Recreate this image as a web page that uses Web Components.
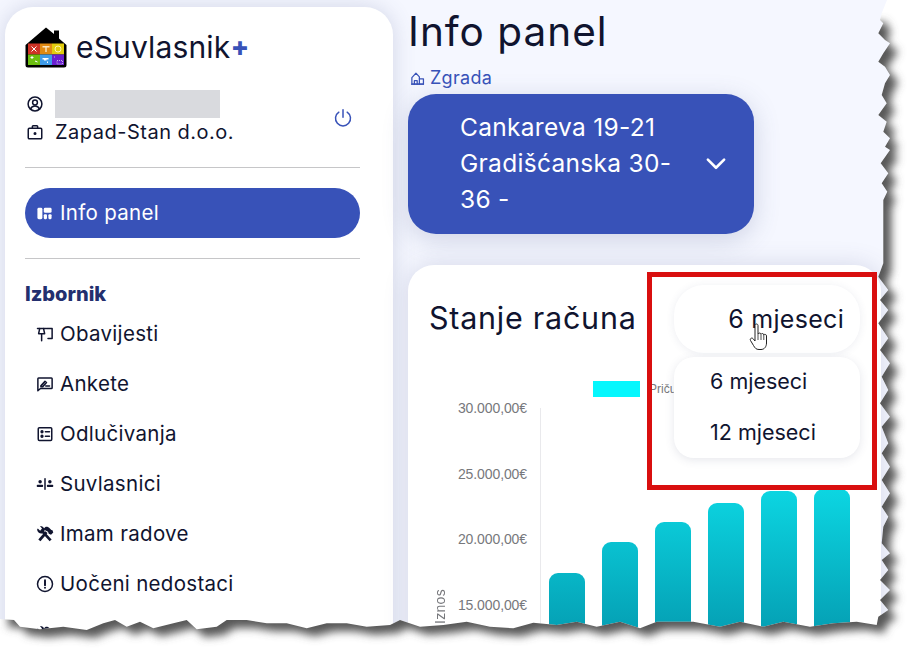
<!DOCTYPE html>
<html lang="hr">
<head>
<meta charset="utf-8">
<title>eSuvlasnik+</title>
<style>
  html, body { margin: 0; padding: 0; background: #fff; }
  body { font-family: Inter, "Open Sans", sans-serif; color: #10142f; }
</style>
</head>
<body>
<app-shell>
  <side-bar>
    <nav-item icon="obavijesti">Obavijesti</nav-item>
    <nav-item icon="ankete">Ankete</nav-item>
    <nav-item icon="odlucivanja">Odlučivanja</nav-item>
    <nav-item icon="suvlasnici">Suvlasnici</nav-item>
    <nav-item icon="radovi">Imam radove</nav-item>
    <nav-item icon="nedostaci">Uočeni nedostaci</nav-item>
    <nav-item icon="radovi"></nav-item>
  </side-bar>
  <main-panel>
    <balance-card></balance-card>
  </main-panel>
</app-shell>
<torn-edge></torn-edge>
<red-frame></red-frame>

<script>
const ICONS = {
  user: '<circle cx="12" cy="12" r="9.2"/><circle cx="12" cy="10" r="3.2"/><path d="M6 19c1-3 3.200-4.200 6-4.200s5 1.200 6 4.200"/>',
  briefcase: '<rect x="3" y="7" width="18" height="14" rx="1.500"/><path d="M8.500 7V4.500a1 1 0 0 1 1-1h5a1 1 0 0 1 1 1V7"/><circle cx="12" cy="14" r="1" fill="currentColor"/>',
  power: '<path d="M7 5a9 9 0 1 0 10 0"/><path d="M12 2v9"/>',
  dashboard: '<g fill="currentColor" stroke="none"><rect x="2" y="4" width="7" height="16" rx="2"/><rect x="11" y="4" width="11" height="7" rx="2"/><rect x="11" y="13" width="4.500" height="7" rx="1.500"/><rect x="17.500" y="13" width="4.500" height="7" rx="1.500"/></g>',
  obavijesti: '<path d="M14 4.500h7.500V18H16"/><path d="M2 4.500h11M3.500 11.500h8M7.500 11.500V21M5 4.500l-1.500 7M10 4.500l1.500 7"/>',
  ankete: '<path d="M2.500 21V5a1 1 0 0 1 1-1h17a1 1 0 0 1 1 1v12a1 1 0 0 1-1 1H6z"/><path d="M6.500 14.500l5.500-6 2 1.500-5 5.500h-2.500zM13 14.500h5"/>',
  odlucivanja: '<rect x="3" y="3.500" width="18" height="17" rx="1.500"/><path d="M12.500 9H18M12.500 15H18"/><circle cx="8" cy="9" r="1.200" fill="currentColor"/><circle cx="8" cy="15" r="1.200" fill="currentColor"/>',
  suvlasnici: '<path d="M12 5v14"/><g fill="currentColor" stroke="none"><circle cx="5.500" cy="9" r="2.300"/><circle cx="18.500" cy="9" r="2.300"/><rect x="1" y="13" width="8.500" height="3" rx="1"/><rect x="14.500" y="13" width="8.500" height="3" rx="1"/></g>',
  radovi: '<path d="M4.500 20.500L14 9.500" stroke-width="3.800" stroke-linecap="butt"/><path d="M19.500 20.500L8.500 8.500" stroke-width="3.600" stroke-linecap="butt"/><g fill="currentColor" stroke="none"><path d="M9.500 5.500L12.500 2.500c2.500-.5 4.500 .5 6 2l2 2 1.500 .5 1 3-3 3-3-1.500-1-2.500-2.500-1.500z"/><path d="M1.500 5.500a5.500 5.500 0 0 0 7.500 5.500l2.200-2.200A5.500 5.500 0 0 0 5.500 1.500L8 4.500 5.500 7.500 2.500 4.500z"/></g>',
  nedostaci: '<circle cx="12" cy="12" r="10"/><path d="M12 7v6.500" stroke-width="2.600"/><circle cx="12" cy="17" r="1.300" fill="currentColor" stroke="none"/>',
  zgrada: '<path d="M3 21V10.500l6.500-7 5.500 6V21z"/><path d="M15 12.500h6.500V21H15"/><path d="M7 21v-5.500h4.500V21"/><path d="M2.500 21h19"/>',
  chevron: '<path d="M4.500 8l7.500 7.500L19.500 8"/>'
};

class UiIcon extends HTMLElement {
  connectedCallback() {
    const name = this.getAttribute('name');
    const size = this.getAttribute('size') || 18;
    const sw = this.getAttribute('stroke') || 2;
    this.attachShadow({ mode: 'open' }).innerHTML = `
      <style>
        :host { display: inline-flex; flex: none; width: ${size}px; height: ${size}px; }
        svg { width: 100%; height: 100%; display: block; fill: none; stroke: currentColor; stroke-width: ${sw}; stroke-linecap: round; stroke-linejoin: round; }
      </style>
      <svg viewBox="0 0 24 24">${ICONS[name] || ''}</svg>`;
  }
}
customElements.define('ui-icon', UiIcon);

class LogoMark extends HTMLElement {
  connectedCallback() {
    this.attachShadow({ mode: 'open' }).innerHTML = `
      <style>:host { display: block; width: 42px; height: 41px; flex: none; } svg { display: block; }</style>
      <svg width="42" height="41" viewBox="0 0 42 41">
        <path d="M0.500 18L21 0.500 29 7V3.500h5V11.500L41.500 18V38a2.500 2.500 0 0 1-2.500 2.500H3A2.500 2.500 0 0 1 .5 38z" fill="#000"/>
        <rect x="3" y="16.500" width="12" height="11" fill="#cf3326"/>
        <rect x="15" y="16.500" width="12" height="11" fill="#e08a12"/>
        <rect x="27" y="16.500" width="12" height="11" fill="#e2cc0e"/>
        <rect x="3" y="27.500" width="12" height="10.500" fill="#6cbf10"/>
        <rect x="15" y="27.500" width="12" height="10.500" fill="#3f9be8"/>
        <rect x="27" y="27.500" width="12" height="10.500" fill="#6a1fd0"/>
        <path d="M6.500 19.500l5 5M11.500 19.500l-5 5" stroke="#fff" stroke-width="1"/>
        <path d="M17.500 19h7v1.500h-2.800v4.500h-1.400v-4.500h-2.800z" fill="#fbe7c0"/>
        <circle cx="33" cy="22" r="3" fill="none" stroke="#fff8c0" stroke-width=".9"/>
        <path d="M5.500 30.500h3M7 29v3M10 34l2.500 1" stroke="#fff" stroke-width="1"/>
        <path d="M17.500 31h6v1.500h-2v1h-2.500v-1h-1.500z" fill="#fff"/><path d="M22.500 34.500v1.500" stroke="#fff"/>
        <path d="M29 30h2M32 33.500h5.500v3.500H32z" stroke="#ddd" stroke-width=".8" fill="none" stroke-dasharray="1 1"/>
      </svg>`;
  }
}
customElements.define('logo-mark', LogoMark);

class NavItem extends HTMLElement {
  connectedCallback() {
    const icon = this.getAttribute('icon');
    this.attachShadow({ mode: 'open' }).innerHTML = `
      <style>
        :host { display: flex; align-items: center; gap: 6px; height: 50px; padding-left: 11px; font-size: 20.500px; letter-spacing: .3px; color: #10142f; }
        span { margin-top: -2px; }
      </style>
      <ui-icon name="${icon}" size="18"></ui-icon><span><slot></slot></span>`;
  }
}
customElements.define('nav-item', NavItem);

class SideBar extends HTMLElement {
  connectedCallback() {
    this.attachShadow({ mode: 'open' }).innerHTML = `
      <style>
        :host { display: block; box-sizing: border-box; width: 388px; height: 700px; margin-top: 7px; flex: none; padding: 20px 33px 0 20px; background: #fff; border-radius: 28px; box-shadow: 0 0 22px rgba(70, 80, 130, .2); }
        .brand { display: flex; align-items: center; gap: 9px; height: 40px; font-size: 30px; letter-spacing: .15px; }
        .plus { color: #3852b8; font-size: 19px; margin-left: -7px; margin-top: 2px; }
        .who { display: flex; align-items: center; justify-content: space-between; margin-top: 23px; padding-right: 7px; }
        .row { display: flex; align-items: center; gap: 11px; height: 28px; padding-left: 1px; font-size: 20px; letter-spacing: .5px; }
        .blur { width: 165px; height: 28px; background: #d9dade; }
        .power { color: #3852b8; }
        hr { border: 0; border-top: 1px solid #c6c6c8; margin: 20px 0; }
        .who + hr { margin-top: 21px; }
        .active { display: flex; align-items: center; gap: 7px; height: 50px; padding-left: 11px; border-radius: 25px; background: #3852b8; color: #fff; font-size: 20.500px; letter-spacing: .3px; }
        .active span { margin-top: -2px; }
        .title { height: 30px; line-height: 30px; font-size: 20px; font-weight: 800; color: #232f6e; }
      </style>
      <div class="brand"><logo-mark></logo-mark><span>eSuvlasnik</span><span class="plus">✚</span></div>
      <div class="who">
        <div>
          <div class="row"><ui-icon name="user" size="18"></ui-icon><div class="blur"></div></div>
          <div class="row"><ui-icon name="briefcase" size="18"></ui-icon><span>Zapad-Stan d.o.o.</span></div>
        </div>
        <ui-icon class="power" name="power" size="20" stroke="1.800"></ui-icon>
      </div>
      <hr>
      <div class="active"><ui-icon name="dashboard" size="17"></ui-icon><span>Info panel</span></div>
      <hr>
      <div class="title">Izbornik</div>
      <slot></slot>`;
  }
}
customElements.define('side-bar', SideBar);

class BuildingSelect extends HTMLElement {
  connectedCallback() {
    this.attachShadow({ mode: 'open' }).innerHTML = `
      <style>
        :host { display: flex; align-items: center; box-sizing: border-box; width: 346px; height: 140px; margin-top: 4px; padding: 0 25px 0 52px; border-radius: 28px; background: #3852b8; color: #fff; font-size: 24.500px; letter-spacing: .3px; line-height: 36px; box-shadow: 0 6px 26px rgba(70, 80, 130, .22); }
        .value { width: 232px; flex: none; margin-top: -2px; }
        ui-icon { margin-left: auto; }
      </style>
      <div class="value">Cankareva 19-21 Gradišćanska 30-36 -</div>
      <ui-icon name="chevron" size="26" stroke="2.400"></ui-icon>`;
  }
}
customElements.define('building-select', BuildingSelect);

class MainPanel extends HTMLElement {
  connectedCallback() {
    this.attachShadow({ mode: 'open' }).innerHTML = `
      <style>
        :host { display: block; flex: none; width: 473px; }
        h1 { margin: 0; height: 64px; line-height: 64px; font-size: 40.500px; font-weight: 400; letter-spacing: 1px; }
        .label { display: flex; align-items: center; gap: 5px; height: 24px; margin-top: 2px; padding-left: 2px; color: #3852b8; font-size: 18px; letter-spacing: .3px; }
        .label span { margin-top: -2px; }
      </style>
      <h1>Info panel</h1>
      <div class="label"><ui-icon name="zgrada" size="15" stroke="2"></ui-icon><span>Zgrada</span></div>
      <building-select></building-select>
      <slot></slot>`;
  }
}
customElements.define('main-panel', MainPanel);

class PeriodSelect extends HTMLElement {
  connectedCallback() {
    this.attachShadow({ mode: 'open' }).innerHTML = `
      <style>
        :host { display: block; position: relative; width: 186px; height: 68px; flex: none; }
        .btn { display: flex; align-items: center; justify-content: flex-end; box-sizing: border-box; height: 68px; padding-right: 16px; border-radius: 30px; background: #fff; font-size: 25px; letter-spacing: .3px; box-shadow: 0 1px 8px rgba(60, 70, 110, .09); }
        .menu { position: absolute; z-index: 3; top: 72px; left: 0; right: 0; box-sizing: border-box; height: 101px; padding-left: 36px; border-radius: 20px; background: #fff; box-shadow: 0 2px 10px rgba(60, 70, 110, .13); font-size: 21.500px; }
        .menu div { height: 50.500px; line-height: 48px; }
        svg { position: absolute; left: 75px; top: 38px; }
      </style>
      <div class="btn">6 mjeseci</div>
      <div class="menu"><div>6 mjeseci</div><div>12 mjeseci</div></div>
      <svg width="20" height="28" viewBox="0 0 20 28">
        <path d="M6 2.500c0-2 3-2 3 0V11c.5-1.300 3-1.300 3 .3.500-1.200 2.800-1 2.800.6.600-1 2.700-.6 2.700 1V20c0 3.500-2 6.500-5.500 6.500H10C7 26.500 6 25 4.500 22.500L1.500 17.500c-1-1.800 1.300-3.300 2.600-1.800L6 18z" fill="#fff" stroke="#222" stroke-width="1"/>
        <path d="M9 11v6M12 11.500V17M14.800 12V17" stroke="#222" stroke-width=".8"/>
      </svg>`;
  }
}
customElements.define('period-select', PeriodSelect);

class BarChart extends HTMLElement {
  connectedCallback() {
    const tops = [165, 134, 114, 95, 83, 81];
    const bars = tops.map((t, i) => `<rect x="${8 + i * 53}" y="${t}" width="36" height="${300 - t}" rx="9" fill="url(#bar)"/>`).join('');
    const labels = ['30.000,00€', '25.000,00€', '20.000,00€', '15.000,00€'].map(l => `<div>${l}</div>`).join('');
    this.attachShadow({ mode: 'open' }).innerHTML = `
      <style>
        :host { display: block; font-family: "Liberation Sans", Arial, sans-serif; color: #77787c; }
        .legend { display: flex; align-items: center; gap: 9px; height: 16px; margin: 0 0 0 164px; font-size: 12px; }
        .swatch { width: 47px; height: 16px; background: #05f7fd; }
        .plot { display: flex; height: 300px; margin-top: 2px; }
        .axis-title { width: 20px; flex: none; box-sizing: border-box; padding: 190px 0 0 3px; font-size: 14px; }
        .axis-title span { display: block; writing-mode: vertical-rl; transform: rotate(180deg); letter-spacing: .3px; }
        .ticks { width: 78px; flex: none; text-align: right; font-size: 14px; line-height: 18px; letter-spacing: -.1px; }
        .ticks div { height: 65.700px; }
        .bars { margin-left: 13px; margin-top: 9px; border-left: 1px solid #e9e9ec; height: 291px; }
        svg { display: block; }
      </style>
      <div class="legend"><div class="swatch"></div><div>Pričuva</div></div>
      <div class="plot">
        <div class="axis-title"><span>Iznos</span></div>
        <div class="ticks">${labels}</div>
        <div class="bars">
          <svg width="330" height="291" viewBox="0 0 330 291">
            <defs><linearGradient id="bar" gradientUnits="userSpaceOnUse" x1="0" y1="81" x2="0" y2="217">
              <stop offset="0" stop-color="#0cd6e2"/><stop offset="1" stop-color="#05a2b6"/>
            </linearGradient></defs>
            ${bars}
          </svg>
        </div>
      </div>`;
  }
}
customElements.define('bar-chart', BarChart);

class BalanceCard extends HTMLElement {
  connectedCallback() {
    this.attachShadow({ mode: 'open' }).innerHTML = `
      <style>
        :host { display: block; box-sizing: border-box; height: 420px; margin-top: 31px; padding: 20px 21px 0 21px; background: #fff; border-radius: 26px; box-shadow: 0 0 24px rgba(70, 80, 130, .18); }
        header { display: flex; align-items: flex-start; justify-content: space-between; height: 68px; }
        h2 { margin: 0; line-height: 66px; font-size: 30.500px; font-weight: 400; letter-spacing: .75px; }
        bar-chart { margin-top: 28px; }
      </style>
      <header><h2>Stanje računa</h2><period-select></period-select></header>
      <bar-chart></bar-chart>`;
  }
}
customElements.define('balance-card', BalanceCard);

class AppShell extends HTMLElement {
  connectedCallback() {
    this.attachShadow({ mode: 'open' }).innerHTML = `
      <style>
        :host { display: flex; gap: 15px; box-sizing: border-box; width: 922px; height: 662px; padding-left: 5px; overflow: hidden; background: #f5f7ff; }
      </style>
      <slot></slot>`;
  }
}
customElements.define('app-shell', AppShell);

class RedFrame extends HTMLElement {
  connectedCallback() {
    this.attachShadow({ mode: 'open' }).innerHTML = `
      <style>
        :host { position: absolute; left: 647px; top: 272px; box-sizing: border-box; width: 230px; height: 218px; border: 5px solid #d90f0f; pointer-events: none; }
      </style>`;
  }
}
customElements.define('red-frame', RedFrame);

// torn paper edge traced from the screenshot, points are x,y in page pixels
class TornEdge extends HTMLElement {
  connectedCallback() {
    const fromRight = [[65,40],[60,60],[70,70],[55,100],[75,120],[90,130],[70,160],[55,185],[75,200],[90,225],[75,250],[65,285],[80,310],[55,345],[80,365],[70,395],[90,415],[75,440],[90,450],[62,490],[85,520],[65,550],[82,575],[70,600]]
      .map(([x, y]) => [860 + x / 3, y / 3]);
    const lower = [[1450,10],[1435,50],[1465,90],[1440,120],[1465,150],[1435,190],[1465,235],[1440,270],[1470,310],[1445,350],[1465,390],[1440,430],[1470,470],[1445,500],[1465,550],[1445,580],[1470,620],[1445,660],[1470,700],[1445,740],[1465,770],[1450,800],[1445,850],[1470,880],[1445,900],[1465,930],[1440,960],[1470,990],[1440,1020],[1465,1050],[1435,1070],[1430,1095],[1370,1085],[1300,1090],[1230,1100],[1150,1085],[1090,1100],[1020,1085],[960,1100],[880,1085],[770,1085],[720,1105],[660,1085],[590,1100],[530,1085],[470,1095],[400,1088],[340,1105],[270,1100],[200,1085],[130,1095],[60,1100],[0,1080]]
      .map(([x, y]) => [400 + x / 3, 260 + y / 3]);
    const left = [[1170,1065],[1100,1070],[1040,1060],[980,1060],[920,1075],[860,1060],[800,1060],[740,1050],[680,1050],[650,1070],[590,1078],[560,1050],[520,1060],[460,1075],[420,1055],[380,1070],[345,1050],[310,1060],[260,1080],[190,1070],[120,1078],[60,1070]]
      .map(([x, y]) => [x / 3, 270 + y / 3]);
    const edge = [...fromRight, ...lower, ...left, [14, 620], [0, 619]];
    const d = edge.map(p => p[0].toFixed(1) + ' ' + p[1].toFixed(1)).join('L');
    const paper = `M0 0L887 0L${d}Z`;
    const shade = `M16 14L878 14L${d.replace(/^[^L]*L/, '')}Z`;
    this.attachShadow({ mode: 'open' }).innerHTML = `
      <style>
        :host { position: absolute; left: 0; top: 0; width: 922px; height: 662px; pointer-events: none; }
        svg { display: block; }
      </style>
      <svg width="922" height="662" viewBox="0 0 922 662">
        <defs>
          <filter id="soft" x="-5%" y="-5%" width="110%" height="110%"><feGaussianBlur stdDeviation="4.500"/></filter>
          <clipPath id="outside"><path clip-rule="evenodd" d="M0 0H922V662H0Z ${paper}"/></clipPath>
        </defs>
        <path fill="#fff" fill-rule="evenodd" d="M0 0H922V662H0Z ${paper}"/>
        <g clip-path="url(#outside)">
          <path d="${shade}" fill="#585858" transform="translate(8 8)" filter="url(#soft)"/>
        </g>
      </svg>`;
  }
}
customElements.define('torn-edge', TornEdge);
</script>
</body>
</html>
